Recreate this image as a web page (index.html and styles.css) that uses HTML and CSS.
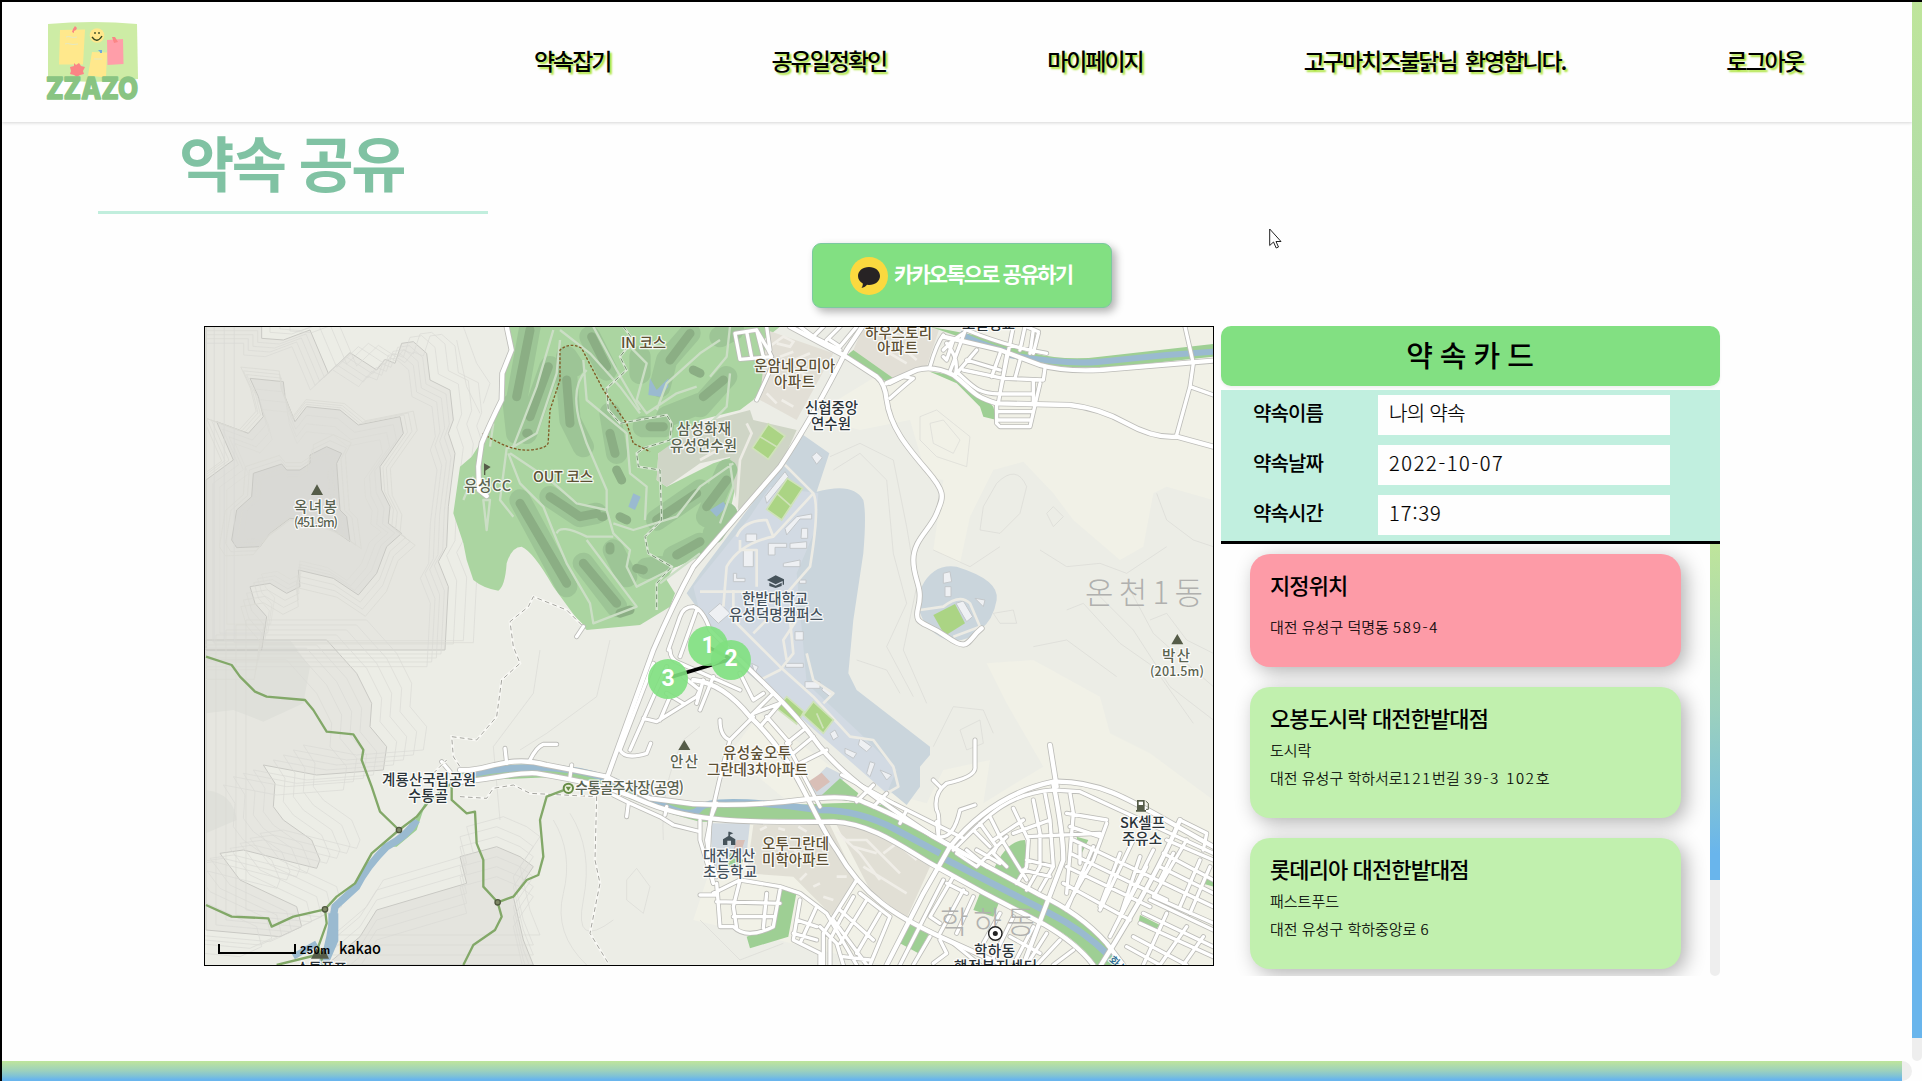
FILE: index.html
```html
<!DOCTYPE html>
<html lang="ko">
<head>
<meta charset="utf-8">
<title>ZZAZO - 약속 공유</title>
<link rel="stylesheet" href="styles.css">
</head>
<body>
<div class="window">
  <div class="page">
    <header class="header">
      <svg class="logo" viewBox="0 0 100 84" role="img" aria-label="ZZAZO">
        <path d="M5 5Q50 1 94 5L95 60Q50 66 5 60Z" fill="#cdeca5"/>
        <path d="M17 11l25-.5-2 35-24 0z" fill="#ffe88c"/>
        <path d="M49 33l15 .5-1 25-18-2z" fill="#ffe88c"/>
        <path d="M64 21l16-1 .5 25-16 1z" fill="#ff9ea9"/>
        <path d="M23 18q3-1 5 0t6 0M22 25q3-1 5 0t8 0M51 40h8" stroke="#e4e8c4" fill="none"/>
        <circle cx="54" cy="16.500" r="7.300" fill="#ffe88c"/>
        <path d="M49 18q5 7 10-1M52 13v2M56 13v2" stroke="#33451f" stroke-width="1.300" fill="none"/>
        <path d="M32 7l2 2-1 2-2 1 0 2-2-1 1-3zM69 18l3 0 3 5-4 1z" fill="#fb8585"/>
        <path d="M55 31h4v3h-2v-1z" fill="#71a9db"/>
        <path d="M31 44l2 2 3-2 2 3 4 1-2 4 1 3-4 1-3 2-3-2-4-1 1-3-1-4 4-1z" fill="#fb8585"/>
        <text class="logo-text" x="3" y="79.500" textLength="92" lengthAdjust="spacingAndGlyphs">ZZAZO</text>
      </svg>
      <nav class="nav">
        <a>약속잡기</a><a>공유일정확인</a><a>마이페이지</a><a>고구마치즈불닭님 환영합니다.</a><a>로그아웃</a>
      </nav>
    </header>

    <main class="main">
      <h1 class="title">약속 공유</h1>
      <button class="share">
        <svg class="talk" viewBox="0 0 38 38"><circle cx="19" cy="19" r="19" fill="#fbd93f"/><path d="M19 10c6.300 0 11 3.900 11 9s-4.700 9-11 9l-2-.2c-1.500 1.700-3.500 2.900-5.500 3.200.9-1.200 1.400-2.800 1.300-4.500C9.800 24.800 8 22.200 8 19c0-5.100 4.700-9 11-9z" fill="#272324"/></svg>
        <span>카카오톡으로 공유하기</span>
      </button>

      <div class="content">
        <div class="map">
          <svg viewBox="205 327 1008 638" width="1008" height="638">
            <defs>
              <path id="hillA" d="M18 20H185L185 55 250 60 330 30 385 160 450 98 530 150 555 118 585 130 605 70 640 65 680 100 690 180 750 210 760 300 745 340 765 400 745 560 740 680 715 725 745 800 735 990H18Z"/>
              <path id="hillB" d="M150 175L250 185 255 230 285 305 320 260 420 270 475 315 600 290 610 340 540 440 545 510 570 560 565 610 605 640 560 680 530 760 475 825 400 775 295 750 300 800 260 820 210 790 150 800 165 850 200 890 185 990H18V480L100 420 50 305 145 340 190 290 175 230Z"/>
              <path id="hillC" d="M330 405L380 380 425 400 410 430 420 570 440 590 450 665 400 630 320 600 270 595 210 640 180 680 110 683 95 660 110 570 155 530 160 460 245 432 260 450 300 450 330 430Z"/>
              <path id="hillD" d="M18 960H380L470 1060 515 1150 510 1220 560 1280 550 1350 350 1365 190 1335 225 1390 220 1460 250 1500 335 1560 360 1620 350 1645 130 1590 60 1600 120 1680 290 1760 305 1820 240 1850 18 1830Z"/>
              <path id="hillE" d="M890 1580L960 1610 1000 1640 940 1730 970 1860 1000 1935H380L480 1850 530 1770 800 1690 780 1610Z"/>
              <g id="wide">
                <path d="M2000 0L1940 90Q1840 290 1740 440L1480 740Q1420 850 1360 990L1215 1390"/>
                <path d="M1770 20L1930 105 2030 170Q2055 190 2060 240C2070 320 2120 380 2180 450S2230 530 2210 580 2140 660 2140 720 2170 800 2155 860 2170 900 2240 950 2300 960 2345 925"/>
                <path d="M2060 190L2150 150Q2200 135 2260 165C2320 210 2310 225 2390 250L2610 255Q2700 265 2780 310T2930 350L3040 380"/>
                <path d="M2230 50L2400 90 2520 135Q2590 155 2700 150L3040 122"/>
                <path d="M1620 1020C1700 1100 1780 1170 1860 1280 1940 1380 2080 1470 2200 1550L2290 1600 2520 1725Q2640 1780 2720 1870L2770 1935"/>
                <path d="M1480 1080Q1570 1090 1650 1190C1800 1330 1830 1480 1910 1590 1990 1730 2090 1790 2220 1850L2420 1940"/>
                <path d="M780 1350C850 1360 920 1300 1040 1335L1220 1370 1350 1435 1480 1452Q1650 1460 1800 1440T2000 1450Q2120 1500 2290 1600"/>
                <path d="M760 1385C860 1385 930 1355 1010 1360 1130 1380 1230 1400 1320 1440 1450 1500 1600 1510 1900 1505 2020 1510 2120 1590 2200 1635L2350 1718 2530 1812Q2630 1870 2680 1935"/>
                <path d="M2060 1935L2170 1720 2250 1580C2340 1470 2440 1410 2560 1385 2720 1380 2820 1460 3040 1580"/>
                <path d="M2940 1500Q2870 1670 2700 1940M2560 1390Q2590 1540 2590 1620 2560 1700 2470 1935M2550 1275L2570 1400"/>
                <path d="M920 20L935 90 907 160 905 240Q870 310 845 370L835 440 837 510 860 528"/>
              </g>
              <g id="small">
                <path d="M1605 40L1670 30 1705 90 1715 110 1620 118ZM1640 35L1655 112M1670 30L1690 110M1720 130L1670 240M1700 20L1710 90M1800 20L1840 50 1920 90M1840 50L1870 20M1880 60L1920 20M1890 60L1920 80 1970 20"/>
                <path d="M2230 45Q2210 70 2190 140M2230 90L2260 60 2290 40M2230 110L2240 120 2260 60M2300 20L2250 155M2240 70Q2280 120 2265 165M2300 30Q2420 80 2540 100M2330 90L2270 160M2300 120L2400 150M2290 150L2410 175 2530 180 2535 145M2270 155C2320 200 2330 220 2400 222H2500M2390 250V310L2400 320H2490L2520 190M2390 275H2500M2392 300H2495M2440 20L2400 220M2400 100L2375 170M2420 105L2395 250M2460 120L2445 175M2475 20L2460 90M2500 30L2490 100M2515 40L2500 100M2480 20L2515 35M2500 180L2500 250M2110 170L2140 175Q2120 190 2070 235M2070 190L2130 160"/>
                <path d="M2955 20L2980 130 2970 200 2930 345M2970 200L3040 225"/>
                <path d="M1480 860Q1450 860 1440 890L1405 990M1480 860Q1510 870 1530 930L1620 1020M1490 870L1440 1010M1410 990Q1410 1020 1440 1030L1620 1110M1360 1030L1260 1290Q1275 1320 1340 1300L1352 1270M1400 1040L1290 1290M1450 1070L1500 1110 1490 1130 1370 1205 1330 1195M1400 1120L1450 1150M1510 1080L1490 1150M1410 1130L1380 1200M1540 1070L1500 1170M1620 1060L1660 1140 1690 1120M1660 1180L1740 1150M1650 1190L1720 1120M1680 1220L1740 1150M1700 1190L1770 1270M1760 1270L1810 1230M1780 1300L1840 1250M1800 1330L1880 1290M1590 1260Q1560 1250 1560 1200M1590 1260L1660 1190M1590 1260Q1550 1400 1520 1560L1540 1690M1760 1270L1860 1460"/>
                <path d="M915 1285L920 1330M990 1320Q1010 1280 1030 1273H1070M1115 1335L1110 1370M1240 1425L1290 1450 1380 1490 1420 1515 1500 1535M1280 1490L1285 1450M1395 1485L1400 1460M1500 1500V1560L1540 1690M1530 1500L1525 1600 1550 1670M1550 1450L1530 1500M725 1325L750 1355M1130 950L1150 920"/>
                <path d="M1925 1365L2080 1450 2290 1555M2020 1395L1970 1445M2060 1420L2020 1460M2120 1470L2100 1510M2210 1505L2215 1550Q2260 1560 2280 1470L2325 1455M2215 1550Q2220 1480 2210 1470 2200 1420 2240 1390 2330 1370 2325 1340V1260M2220 1400L2200 1380"/>
                <path d="M2260 1590C2360 1490 2420 1420 2560 1410L2640 1415 2780 1480 3040 1600M2320 1530L2370 1580M2340 1510L2390 1580 2380 1600 2420 1640M2370 1490L2400 1550 2480 1680M2440 1465L2485 1560 2480 1640 2450 1690M2500 1440L2520 1540 2520 1640 2480 1710M2535 1420L2550 1500 2560 1640 2520 1710M2610 1420L2620 1480 2600 1720M2380 1560L2470 1500M2300 1590L2360 1640M2330 1590L2400 1630M2480 1550L2700 1540M2600 1480L2720 1500M2610 1520L2700 1550M2270 1600L2330 1640 2420 1550M2440 1540L2550 1500M2480 1620L2560 1640M2470 1650L2550 1670M2720 1510L2680 1620 2600 1760M2620 1560L3040 1760M2610 1600L2900 1740M2600 1640L2850 1760M2640 1570L2640 1630M2590 1690L2790 1800M2760 1600L2700 1760M2820 1610L2760 1790M2800 1560L2700 1770M2860 1590L2740 1830M2680 1580L2600 1770M2840 1640L2730 1850"/>
                <path d="M2940 1500L3020 1540 3010 1590M2900 1560L3040 1620M2890 1600L3040 1680M2880 1640L3040 1720M2960 1560L2860 1730 3040 1810M3000 1620L2940 1760M3030 1640L2970 1780M2920 1600L2880 1680M2850 1740L3040 1830M2830 1780L3040 1880M2820 1810L3040 1910M2800 1850L2960 1935M2780 1880L2880 1935M2900 1780L2830 1935M2960 1820L2880 1935M3010 1850L2950 1935"/>
                <path d="M2260 1670L2190 1790 2220 1810M2240 1690L2300 1720M2290 1710L2220 1840M2320 1730L2270 1840M2400 1780L2350 1870M2440 1790L2370 1935M2500 1820L2440 1935M2540 1840L2480 1935M2580 1860L2510 1935M2620 1890L2560 1935M2230 1680L2100 1935M2190 1850L2140 1935M2220 1860L2240 1900 2200 1930M2260 1870L2340 1935M2430 1850L2520 1900"/>
                <path d="M1550 1690L1560 1820 1600 1820Q1640 1860 1720 1820L1740 1710M1620 1680L1600 1760 1610 1825M1550 1745L1740 1750M1600 1790H1720M1540 1720L1620 1680 1740 1700 1800 1720 1880 1780 1970 1935M1700 1720L1690 1825M1800 1740L1780 1860 1860 1900 1860 1935M1850 1760L1800 1870M1970 1680L1870 1840 1870 1935M1960 1730L1920 1800 1890 1860 1890 1935M1980 1720L2070 1790 2010 1935M2000 1740L1920 1870M2040 1780L1970 1900M1900 1800L2000 1935M1920 1770L2020 1860M1860 1820L1910 1870 1930 1935M1790 1800L1850 1820M1780 1840L1850 1860M1500 1725H1545M1930 1910L2010 1920"/>
              </g>
              <g id="trees">
                <path d="M1060 30L1010 200 940 380M1080 60L1070 160 1010 340 940 380 920 385 900 540 940 590M1080 30L1170 100 1260 200 1320 280M1180 20L1250 150 1320 270M1290 80L1340 130 1310 240 1340 280 1430 220 1490 200M1370 270L1400 190 1500 100 1560 60M1160 150Q1110 200 1140 310L1160 370 1220 510 1220 570 1240 640 1290 690 1280 740 1310 800 1420 745M1150 120L1160 240 1280 340 1290 460 1340 500 1335 600M930 400L1050 480 1130 550 1220 570M925 400L960 490 1030 560 1070 660 1100 730 1170 850 1180 910 1310 860 1280 820 1160 660M1070 640Q1080 610 1160 650L1240 650M1240 610L1300 630 1430 590 1500 500 1600 430M860 630L850 540 870 540ZM790 540L820 470M1590 20L1580 110 1530 170M1590 160L1580 260 1530 310M1590 430L1600 500 1560 610M870 380L880 310M1380 790L1500 700"/>
              </g>
            </defs>
            <rect x="200" y="320" width="1020" height="650" fill="#ecede6"/>
            <g transform="translate(200 320) scale(.33333)">
              <use href="#hillA" fill="#e6e6e0"/><use href="#hillB" fill="#e0e0db"/><use href="#hillC" fill="#d9d9d5"/><use href="#hillD" fill="#e6e6e0"/><use href="#hillE" fill="#e4e4de"/>
              <path d="M18 960H270L330 1040 310 1150 190 1205 100 1170 18 1180Z" fill="#dfe0da"/>
              <path d="M18 1410Q100 1420 110 1500L18 1540Z" fill="#dfe0da"/>
              <g class="contour">
                <use href="#hillA"/><use href="#hillB"/><use href="#hillC"/><use href="#hillD"/><use href="#hillE"/>
                <g class="faint">
                  <use href="#hillA" transform="translate(-12 12)"/><use href="#hillA" transform="translate(-26 24)"/><use href="#hillA" transform="translate(-40 36)"/><use href="#hillA" transform="translate(-54 50)"/><use href="#hillA" transform="translate(25 -18)"/><use href="#hillA" transform="translate(55 -28)"/><use href="#hillA" transform="translate(85 -22)"/>
                  <use href="#hillB" transform="translate(22 44) scale(.93)"/><use href="#hillB" transform="translate(44 88) scale(.86)"/><use href="#hillB" transform="translate(66 130) scale(.79)"/><use href="#hillB" transform="translate(-18 -20) scale(1.050)"/><use href="#hillB" transform="translate(-35 -40) scale(1.100)"/><use href="#hillB" transform="translate(-50 -60) scale(1.150)"/>
                  <use href="#hillC" transform="translate(28 56) scale(.9)"/><use href="#hillC" transform="translate(56 112) scale(.8)"/><use href="#hillC" transform="translate(-28 -56) scale(1.100)"/><use href="#hillC" transform="translate(-56 -112) scale(1.200)"/>
                  <use href="#hillD" transform="translate(-30 15)"/><use href="#hillD" transform="translate(-60 25)"/><use href="#hillD" transform="translate(-90 35)"/><use href="#hillD" transform="translate(30 -15)"/><use href="#hillD" transform="translate(60 -30)"/><use href="#hillD" transform="translate(90 -45)"/><use href="#hillD" transform="translate(120 -60)"/><use href="#hillD" transform="translate(-120 60)"/>
                  <use href="#hillE" transform="translate(0 30)"/><use href="#hillE" transform="translate(0 60)"/><use href="#hillE" transform="translate(0 90)"/><use href="#hillE" transform="translate(0 -30)"/><use href="#hillE" transform="translate(0 -60)"/><use href="#hillE" transform="translate(20 -90)"/>
                  <path d="M790 20L830 130 870 190 850 250M770 60L800 200 840 280M1020 990L1000 1120 880 1280 900 1500M1230 960L1190 1130 1040 1240 960 1290M1060 1500Q1120 1600 1090 1720T1160 1935M1110 1480Q1180 1590 1150 1740T1240 1800M1280 1680L1310 1645 1350 1700 1330 1780 1280 1740ZM1390 1560Q1380 1400 1450 1260L1500 1220"/>
                </g>
              </g>
              <!-- open land on the east side -->
              <path d="M1830 290L2010 180 2350 20H3040V540L2900 500 2860 520 2830 680 2760 720 2620 600 2560 520 2470 425 2380 450 2310 590 2280 730 2200 690 2230 480 2180 470 2130 300 1980 330Z" fill="#f1f1e7"/>
              <path d="M2360 1030L2500 1020 2700 1130 2730 1240 2850 1300 3040 1440V1935H2400L2050 1935 1480 1800 1530 1650 1560 1500 1830 1500 1590 1300 1680 1180 1960 1390 2180 1450 2230 1350 2370 1320 2350 1450 2430 1400 2530 1340 2420 1150Z" fill="#f1f1e7"/>
              <g class="contour faint">
                <path d="M2160 290L2210 270 2260 310 2310 350 2300 440 2210 410 2160 360ZM2190 310L2230 300 2280 360 2260 400 2200 370ZM2390 490Q2450 430 2480 500L2460 580 2400 640 2340 630 2350 560ZM2540 580L2560 560 2590 590 2560 620Z"/>
                <path d="M1890 410L1980 370 2080 420 2120 620 2150 800 2110 990 2180 1150M1900 450L1980 400 2060 480 2080 700 2120 850 2060 980 2140 1130M2200 690L2310 740 2400 680M2520 690L2600 740 2700 730 2780 760 2900 680M2600 870L2650 850 2760 970 2860 1040 2980 1210M2700 830L2800 930 2910 1100 3040 1200M2780 790L2860 940 2960 1030 3040 1100M2850 900L2900 880 2960 960 3040 1000M2870 520L2900 600 2980 660 3040 680M2380 880L2440 870 2450 910 2400 910ZM2280 1230L2340 1200 2350 1270 2300 1290ZM2200 1280L2260 1160 2350 1170 2380 1240M1970 1020L2060 1050 2100 1120M1500 1800L1620 1920 1750 1870M2500 980L2600 960 2750 1070"/>
              </g>
              <!-- golf course -->
              <path d="M925 20L935 80 905 160 905 240 860 340 815 410 780 440 760 580 790 670 800 720 820 780Q850 805 895 812 915 800 920 730 935 680 965 680 1000 695 1060 800L1140 910 1160 930 1320 915 1410 860 1425 820 1400 780 1420 745 1500 710 1580 620 1620 440 1600 410 1540 430 1400 500 1370 480 1375 400 1500 350 1500 300 1620 270 1660 240 1720 160 1690 60 1740 20Z" fill="#abd5a1"/>
              <path d="M1500 310L1650 270 1660 300 1790 330 1740 440 1620 590 1600 500 1590 410 1500 430 1400 500 1370 480 1375 400Z" fill="#cfd5c6"/>
              <g class="rough"><path d="M990 20L950 240M940 250L950 340M1050 140L980 340M1100 170L1110 300 1150 380M1170 50L1220 150M1470 40L1400 120 1380 200M1320 110V160M1230 280L1250 400M1330 320H1390M960 540L1100 800M1050 530L1140 590 1190 580M1150 730L1250 860M1370 600L1500 510M1420 710L1500 670M1340 745L1380 740M1500 250L1400 290M1560 50L1600 30M1500 260L1580 170M1520 590L1580 450M1540 640L1580 580M1240 690L1280 770M1100 110L1120 140"/></g>
              <g class="fairway"><path d="M990 30L950 230M1045 140L990 290M1100 180L1110 310M1175 50L1220 140M1470 40L1410 120M1230 340L1245 400M1350 320H1390M960 550L1100 790M1050 530L1140 590 1190 580M1150 730L1250 850M1370 600L1490 520M1430 705L1500 665M1520 560L1580 480M1510 230L1570 180M1250 450L1265 480M1310 745L1330 750M1480 150L1500 160M1205 590H1210M1230 680V690M1260 880L1290 870M980 340H985M1260 590L1280 600"/></g>
              <g fill="#9abad0"><path d="M1350 175L1370 210 1405 175 1405 200 1380 230 1345 225ZM1300 520L1322 530 1305 570 1285 560ZM1530 570L1570 545 1580 560 1550 590Z"/></g>
              <use href="#trees" fill="none" stroke="#cbdec5" stroke-width="7" stroke-linejoin="round"/>
              <path d="M1270 20L1300 60 1260 110 1280 150 1220 205 1225 270 1260 310 1400 285 1415 310 1410 360 1330 385 1310 400 1315 440 1380 450 1385 600 1335 650 1345 700 1415 740 1370 790 1370 870" fill="none" stroke="#dbe7d6" stroke-width="7"/>
              <path d="M1270 20L1300 60 1260 110 1280 150 1220 205 1225 270 1260 310 1400 285 1415 310 1410 360 1330 385 1310 400 1315 440 1380 450 1385 600 1335 650 1345 700 1415 740 1370 790 1370 870" fill="none" stroke="#74946f" stroke-width="3" stroke-dasharray="14 10"/>
              <path d="M848 340Q930 395 990 390T1045 360L1050 270 1080 180V90Q1110 65 1145 85L1210 210 1280 310 1300 370 1350 395" fill="none" stroke="#805a25" stroke-width="4" stroke-dasharray="8 5"/>
              <!-- apartments and campus -->
              <path d="M1700 30L1900 100 1790 300 1680 240ZM1990 20H2220L2180 140 2060 180 1960 90Z" fill="#e2dfd6"/>
              <path d="M1810 345L1888 400 1850 515Q1960 485 1990 540 2000 580 1990 700L1960 900 1945 1060 1970 1110 2190 1280 2190 1305 2160 1340 2160 1400 2120 1455 1620 1040 1460 820 1500 760Z" fill="#cad5dc"/>
              <path d="M1650 590L1710 500 1855 520 1850 620 1790 760 1820 1090 1980 1240 2090 1350 2060 1420 1730 1130 1640 1020 1500 880 1480 800Z" fill="#d2dae3"/>
              <path d="M2165 800Q2200 730 2270 740 2400 780 2390 840 2380 900 2340 930 2300 970 2240 960 2170 930 2155 860Z" fill="#cad5dc"/>
              <path d="M1880 1340L1940 1370 1860 1430 1820 1400ZM1530 1510H1650L1640 1600 1540 1650Z" fill="#d2dae1"/>
              <path d="M1660 1515H1890L1950 1640 2020 1730 1970 1690 1900 1790 1780 1670 1640 1660ZM1910 1515L2010 1530 2190 1640 2120 1795 2010 1710Z" fill="#e1dfd5"/>
              <g fill="#9ecf94">
                <path d="M1960 90L2080 175 2060 185 1930 115ZM2190 155Q2290 160 2380 260L2390 300 2350 290 2340 260 2270 190Z"/>
                <path d="M2190 20L2350 50 2480 95Q2600 125 2700 110L3040 72V110L2750 140Q2550 150 2440 115L2290 55Z"/>
                <path d="M780 1360Q930 1320 1060 1340L1220 1370 1350 1430 1500 1455Q1700 1460 1900 1450T2080 1490L2300 1600 2570 1745Q2680 1800 2740 1900L2770 1935H2690Q2630 1850 2500 1790L2200 1635Q2030 1520 1900 1505H1500Q1390 1480 1250 1420L1080 1370 850 1380Z"/>
                <path d="M1860 1430L1920 1375 1975 1420 1960 1445ZM2380 1650Q2420 1560 2475 1560 2490 1620 2450 1690ZM1740 1700L1790 1715 1765 1850 1650 1885 1640 1850 1720 1820ZM2130 1810L2190 1835 2155 1900 2100 1870ZM2340 1720L2400 1740 2380 1790 2320 1770ZM2630 1550L2665 1560 2640 1610ZM2820 1785L2880 1815 2860 1835 2815 1810ZM3015 1670L3040 1680V1700L3005 1690Z"/>
                <path d="M560 1580L640 1510 680 1440 650 1530 590 1580Z"/>
              </g>
              <g fill="none" stroke="#9abad0">
                <path d="M800 1365Q930 1335 1070 1345T1340 1430 1500 1465 1860 1470Q1980 1470 2090 1530L2220 1600M2235 1617L2540 1775Q2650 1830 2730 1910" stroke-width="20"/>
                <path d="M2280 40Q2330 70 2420 95M2430 105Q2600 135 2700 125L2900 105 3040 95" stroke-width="18"/>
                <path d="M650 1500Q620 1550 560 1580 500 1640 470 1700L405 1760 390 1850 370 1935" stroke-width="22"/>
                <path d="M400 1780V1860L370 1930" stroke-width="30"/><path d="M280 1910L350 1870" stroke-width="18"/>
              </g>
              <g class="building">
                <path d="M1835 410L1850 397 1867 413 1850 433ZM1695 530L1755 455 1765 470 1700 550ZM1638 642H1670V665H1638ZM1630 690H1660V740H1630ZM1705 670H1760V682H1725V705H1705ZM1770 670L1820 665V685H1770ZM1750 730L1800 720V740H1750ZM1600 760H1610V775H1635V785H1600ZM1525 880L1560 850 1590 880 1555 910ZM1755 625L1790 590 1835 582V597H1800L1760 645ZM1805 625H1823V655H1803ZM1798 780H1818V790H1798ZM1785 935H1810V960H1785ZM1757 1030H1810V1042H1757ZM1815 1085H1860V1105H1815ZM1870 1100L1900 1120 1890 1130 1865 1110ZM1890 1240L1905 1230 1915 1250 1900 1260ZM1980 1255L2015 1280 2000 1295 1975 1275ZM1935 1285L1970 1300 1960 1315 1935 1300ZM2010 1325L2025 1330 2010 1370 2000 1360ZM2040 1350L2075 1365 2060 1380ZM1655 1030L1675 1040 1665 1060ZM2230 760L2250 755 2255 785 2230 790ZM2235 800H2253V830H2235ZM2268 850L2290 843 2318 890 2300 905ZM2325 835L2355 840 2350 860Z"/>
                <g class="block">
                  <path d="M1715 75L1750 50 1780 65 1770 80 1730 70M1740 110L1780 95M1760 130L1830 100M1700 220L1730 250M1745 240L1780 260M1790 150L1840 180M2035 80L2120 130M2080 60L2150 120M2060 30L2110 60M1910 1535L1980 1600 2040 1680M1930 1560L2000 1560 2100 1660M1960 1580L2030 1600M1990 1640L2120 1720M2050 1600L2090 1570 2150 1620M1680 1530L1700 1520M1735 1525L1755 1530M1795 1520L1820 1535M1710 1570L1740 1590M1780 1580L1790 1600M1800 1680L1820 1660M1840 1700L1860 1690M1870 1730L1900 1740M1910 1670L1940 1670"/>
                </g>
              </g>
              <g class="campusroad"><path d="M1755 435L1840 520 1720 650Q1620 670 1580 740L1570 860M1840 520Q1860 560 1830 740L1760 820M1610 650Q1630 600 1700 600L1720 650M1620 660V690H1670V800M1500 815H1660L1760 840M1600 810V900L1660 960 1740 1040 1840 1130 1950 1250 2020 1260 2080 1340 2095 1400 2060 1420M1770 900L1780 1000 1740 1050 1680 1080M1660 940L1720 880M2160 870L2230 860Q2280 820 2310 850L2340 920 2260 950M1760 1020L1750 960 1790 900M1820 1000L1840 1080 1900 1120 1870 1150M1640 310L1655 340 1620 420 1610 560M1590 370L1500 420"/></g>
              <g fill="#abd484" stroke="#cfe2b9" stroke-width="5"><path d="M1705 312L1755 348 1705 418 1657 384ZM1762 475L1808 505 1745 600 1700 568ZM1760 1130L1812 1175 1790 1212 1730 1165ZM1840 1145L1900 1200 1870 1240 1810 1185Z"/><path d="M1680 350L1730 380M1730 520L1775 560M1850 1180L1870 1225" fill="none"/></g>
              <path d="M2200 885L2265 852 2295 910 2235 947Z" fill="#abd484"/>
              <path d="M1825 1385L1865 1358 1890 1385 1850 1415ZM1610 1560H1635L1625 1590H1600Z" fill="#d9bfb7"/>
              <path d="M1590 1600L1630 1620 1620 1645 1580 1640Z" fill="#9ecf94"/>
              <use href="#small" class="case-small"/><use href="#wide" class="case-wide"/>
              <use href="#small" class="road-small"/><use href="#wide" class="road-wide"/>
              <!-- footpaths and hiking trails -->
              <path class="footcase" d="M1145 915L1100 870 1000 830 985 860 930 905 940 980 960 1030 905 1080 890 1190 830 1260 755 1250 760 1310 780 1340M700 1360L740 1320M780 1430L860 1435 880 1405 940 1395 990 1420 1190 1430 1185 1620 1200 1690 1170 1840 1225 1930"/>
              <path class="foot" d="M1145 915L1100 870 1000 830 985 860 930 905 940 980 960 1030 905 1080 890 1190 830 1260 755 1250 760 1310 780 1340M700 1360L740 1320M780 1430L860 1435 880 1405 940 1395 990 1420 1190 1430 1185 1620 1200 1690 1170 1840 1225 1930"/>
              <g class="trail"><path d="M18 1010L95 1035 120 1070 165 1115 200 1130 315 1140 340 1170 380 1235 460 1243 490 1290 485 1320 515 1400 540 1475 597 1530 650 1490 690 1440 755 1390M597 1530L515 1600 465 1690 410 1730 375 1768 380 1810 355 1880 370 1935M375 1768L280 1790 215 1820 205 1795 95 1790 18 1755M755 1400L755 1440 800 1480 825 1475 830 1570 850 1620 850 1700 893 1747 905 1790 885 1830 820 1875 790 1935M893 1747L940 1730 980 1680 1015 1665 1030 1610 1020 1500 1040 1430 1105 1405M350 1905L230 1935"/></g>
              <g fill="#7d8865" stroke="#50583f" stroke-width="4"><circle cx="597" cy="1530" r="8"/><circle cx="375" cy="1768" r="8"/><circle cx="893" cy="1747" r="8"/></g>
              <circle cx="1105" cy="1405" r="14" fill="#eef2df" stroke="#668c45" stroke-width="6"/><path d="M1097 1400h16l-8 13z" fill="#668c45"/>
              <g fill="#555c48"><path d="M333 525L351 493 369 525ZM1435 1290L1453 1260 1471 1290ZM2914 973L2932 942 2950 973ZM333 1916L350 1885 362 1905 372 1885 387 1916ZM852 430L872 441 856 452V465H852Z"/></g>
              <path d="M1701 780L1727 766 1752 778 1752 794 1748 794 1748 783 1727 793ZM1708 788L1727 797 1745 788V798L1727 804 1708 798Z" fill="#46535b"/>
              <path d="M1569 1575V1558L1585 1548V1535H1589L1600 1540 1590 1544V1548L1606 1558V1575H1593V1562H1582V1575Z" fill="#46535b"/>
              <path d="M2811 1440H2834V1470H2838V1475H2808V1470H2811Z" fill="#555c48"/><path d="M2837 1443L2845 1450V1468H2838" fill="none" stroke="#555c48" stroke-width="3"/><path d="M2816 1445H2829V1455H2816Z" fill="#fff"/>
            </g>

            <g class="area-label"><text x="1085" y="604" textLength="118">온천1동</text><text x="940" y="933" textLength="95">학하동</text></g>
            <g class="label">
              <g class="brown"><text x="621" y="348" textLength="45">IN 코스</text><text x="533" y="482" textLength="60">OUT 코스</text><text x="754" y="371" textLength="81">운암네오미아</text><text x="774" y="387" textLength="41">아파트</text><text x="865" y="338" textLength="67">하우스토리</text><text x="877" y="353" textLength="41">아파트</text><text x="723" y="758" textLength="68">유성숲오투</text><text x="707" y="775" textLength="101">그란데3차아파트</text><text x="762" y="849" textLength="67">오투그란데</text><text x="762" y="865" textLength="67">미학아파트</text></g>
              <g class="olive"><text x="464" y="491" textLength="47">유성CC</text><text x="677" y="434" textLength="54">삼성화재</text><text x="670" y="451" textLength="67">유성연수원</text><text x="294" y="512" textLength="43">옥녀봉</text><text class="height" x="294" y="527" textLength="44">(451.9m)</text><text x="670" y="767" textLength="28">안산</text><text x="575" y="793" textLength="109">수통골주차장(공영)</text><text x="1162" y="661" textLength="28">박산</text><text class="height" x="1150" y="676" textLength="54">(201.5m)</text></g>
              <g class="navy"><text x="805" y="413" textLength="53">신협중앙</text><text x="811" y="429" textLength="40">연수원</text><text x="382" y="785" textLength="94">계룡산국립공원</text><text x="408" y="801" textLength="40">수통골</text><text x="1120" y="828" textLength="45">SK셀프</text><text x="1122" y="844" textLength="40">주유소</text><text x="974" y="956" textLength="41">학하동</text><text x="954" y="972" textLength="83">행정복지센터</text><text x="962" y="329" textLength="53">오월정교</text><text x="296" y="974" textLength="51">수통폭포</text></g>
              <g class="slate"><text x="742" y="604" textLength="66">한밭대학교</text><text x="729" y="620" textLength="94">유성덕명캠퍼스</text><text x="703" y="861" textLength="52">대전계산</text><text x="703" y="877" textLength="54">초등학교</text></g>
              <text class="river" x="1108" y="961" transform="rotate(42 1108 961)">화산천</text>
            </g>
            <circle cx="995.300" cy="933.500" r="6.700" fill="#fff" stroke="#222" stroke-width="1.400"/><circle cx="995.300" cy="933.500" r="2.500" fill="#222"/>
            <path d="M668 678L731 659 708 647" fill="none" stroke="#000" stroke-width="3.500"/>
            <g fill="#7fe07f" fill-opacity=".9"><circle cx="708" cy="646" r="20"/><circle cx="731" cy="660" r="20"/><circle cx="668" cy="679" r="20"/></g>
            <g class="pin"><text x="708" y="653">1</text><text x="731" y="666">2</text><text x="668" y="686">3</text></g>
            <path d="M219 944V953H295V944" fill="none" stroke="#000" stroke-width="2"/>
            <text class="scale" x="300" y="954" textLength="30">250m</text><text class="kakao" x="339" y="954" textLength="42" lengthAdjust="spacingAndGlyphs">kakao</text>
          </svg>
        </div>

        <section class="panel">
          <h2 class="panel-title">약속카드</h2>
          <div class="form">
            <label>약속이름</label><div class="field">나의 약속</div>
            <label>약속날짜</label><div class="field"><span class="date">2022-10-07</span></div>
            <label>약속시간</label><div class="field"><span class="time">17:39</span></div>
          </div>
          <div class="list">
            <div class="cards">
              <article class="card place"><h3>지정위치</h3><p>대전 유성구 덕명동 <span class="num">589-4</span></p></article>
              <article class="card"><h3>오봉도시락 대전한밭대점</h3><p>도시락</p><p>대전 유성구 학하서로<span class="num">121</span>번길 <span class="num">39-3 102</span>호</p></article>
              <article class="card"><h3>롯데리아 대전한밭대점</h3><p>패스트푸드</p><p>대전 유성구 학하중앙로 <span class="num">6</span></p></article>
            </div>
            <div class="track"><div class="thumb list-thumb"></div></div>
          </div>
        </section>
      </div>
    </main>
  </div>
  <div class="track"><div class="thumb page-thumb"></div></div>
  <div class="track track-x"><div class="thumb x-thumb"></div></div>
</div>
<svg class="cursor" viewBox="0 0 13 21"><path d="M.7 1v16.500l3.800-3.500 2.700 6 2.300-1-2.500-5.500h5z" fill="#fff" stroke="#222" stroke-width="1"/></svg>
</body>
</html>
```

FILE: styles.css
```css
* { box-sizing: border-box; }
body {
  margin: 0;
  width: 1922px;
  height: 1081px;
  overflow: hidden;
  font-family: "Noto Sans CJK KR", "Noto Sans", sans-serif;
  color: #000;
}
h1, h2, h3, p { margin: 0; }

.window {
  display: grid;
  grid-template-columns: 1fr 10px;
  grid-template-rows: 1059px 20px;
  height: 1081px;
  border-top: 2px solid #000;
  border-left: 2px solid #000;
  background: #fefefe;
}
.page { overflow: hidden; }

.header {
  display: flex;
  align-items: center;
  height: 120px;
  padding-left: 41px;
  background: #fefefe;
  box-shadow: 0 1px 3px rgba(0, 0, 0, .16);
}
.logo { width: 100px; height: 84px; margin-top: -3px; overflow: visible; }
.logo-text { font: 800 30px "Inter", sans-serif; fill: #89c482; stroke: #89c482; stroke-width: 1.500; stroke-linejoin: round; }
.nav { display: flex; gap: 161px; margin: -4px 0 0 391px; }
.nav a {
  font-size: 23px;
  font-weight: 500;
  line-height: 34px;
  letter-spacing: -2.050px;
  word-spacing: 4px;
  white-space: nowrap;
  text-shadow: 2px 2px 2px #a6e22e;
}

.title {
  width: 390px;
  height: 92px;
  margin-left: 96px;
  border-bottom: 3px solid #c1eedd;
  text-align: center;
  text-indent: -3px;
  font-size: 60px;
  font-weight: 700;
  line-height: 77px;
  letter-spacing: -2.600px;
  color: #80c2a3;
}
.share {
  display: flex;
  align-items: center;
  gap: 6px;
  width: 300px;
  height: 65px;
  margin: 29px 0 0 810px;
  padding: 0 0 0 37px;
  border: 1px solid #7cc9a0;
  border-radius: 9px;
  background: #82e082;
  box-shadow: 4px 4px 9px rgba(0, 0, 0, .3);
  font: 700 21px "Noto Sans CJK KR", sans-serif;
  letter-spacing: -1.900px;
  white-space: nowrap;
  color: #fff;
}
.share span { padding-bottom: 5px; }
.talk { width: 38px; height: 38px; flex: none; }

.content { display: flex; gap: 7px; margin: 18px 0 0 202px; }
.map { width: 1010px; height: 640px; border: 1px solid #000; overflow: hidden; }
.map svg { display: block; }
.contour { fill: none; stroke: #c9c9c4; stroke-width: 3; stroke-linejoin: round; }
.faint { fill: none; stroke: #dadad4; stroke-width: 2; }
.rough { fill: none; stroke: #9dc596; stroke-width: 64; stroke-linecap: round; stroke-linejoin: round; }
.fairway { fill: none; stroke: #8bae84; stroke-width: 27; stroke-linecap: round; stroke-linejoin: round; }
.building { fill: #eef0f3; stroke: #c3c7ca; stroke-width: 3; }
.block { fill: none; stroke: #f0eee8; stroke-width: 8; }
.campusroad { fill: none; stroke: #ecebe4; stroke-width: 8; stroke-linejoin: round; }
.case-wide, .case-small, .road-wide, .road-small { fill: none; stroke-linejoin: round; stroke-linecap: round; }
.case-wide { stroke: #bdbdb9; stroke-width: 18; }
.case-small { stroke: #bdbdb9; stroke-width: 15; }
.road-wide { stroke: #fff; stroke-width: 13; }
.road-small { stroke: #fff; stroke-width: 10; }
.footcase { fill: none; stroke: #f8f8f4; stroke-width: 8; }
.foot { fill: none; stroke: #a5a59f; stroke-width: 3; stroke-dasharray: 14 10; }
.trail { fill: none; stroke: #82a868; stroke-width: 7; stroke-linejoin: round; }
.label { font-size: 14.500px; font-weight: 500; }
.label text { paint-order: stroke; stroke: rgba(255, 255, 255, .85); stroke-width: 2.500px; stroke-linejoin: round; }
.brown { fill: #5d5034; }
.olive { fill: #5a6350; }
.navy { fill: #2b3439; }
.slate { fill: #45525d; }
.label .height { font-size: 12.500px; }
.label .river { font-size: 11px; fill: #2c6d94; }
.area-label { font-size: 31px; font-weight: 300; fill: #b0b0ae; }
.pin { font: 700 23px Roboto, sans-serif; fill: #fff; text-anchor: middle; }
.scale { font: 700 11px "Liberation Sans", sans-serif; }
.kakao { font: 500 16px "Noto Sans CJK KR", sans-serif; }

.panel { width: 499px; }
.panel-title {
  height: 60px;
  padding-left: 6px;
  border-radius: 10px;
  background: #82e082;
  box-shadow: 0 2px 3px rgba(0, 0, 0, .06);
  text-align: center;
  font-size: 29px;
  font-weight: 500;
  line-height: 56px;
  letter-spacing: 7px;
}
.form {
  display: grid;
  grid-template-columns: 125px 292px;
  grid-auto-rows: 40px;
  row-gap: 10px;
  height: 154px;
  margin-top: 4px;
  padding: 5px 0 0 32px;
  border-bottom: 3px solid #000;
  background: #c1efdf;
}
.form label { font-size: 20px; font-weight: 500; line-height: 35px; letter-spacing: -.9px; }
.field {
  padding-left: 11px;
  background: #fefefe;
  font-size: 20px;
  font-weight: 300;
  line-height: 36px;
  letter-spacing: -.7px;
  -webkit-text-stroke: .2px #000;
}
.date { letter-spacing: 1.650px; }
.time { letter-spacing: 1px; }
.list { display: grid; grid-template-columns: 489px 10px; height: 432px; }
.cards { display: flex; flex-direction: column; gap: 20px; padding: 10px 29px; overflow: hidden; }
.card {
  flex: none;
  height: 131px;
  padding: 13px 20px;
  border-radius: 20px;
  background: #c1f0ae;
  box-shadow: 5px 5px 20px rgba(0, 0, 0, .3);
}
.card h3 { margin-bottom: 2px; font-size: 22px; font-weight: 500; line-height: 34px; letter-spacing: -.9px; white-space: nowrap; }
.card p { font-size: 15px; font-weight: 300; line-height: 28px; white-space: nowrap; -webkit-text-stroke: .2px #000; }
.num { letter-spacing: 1.800px; }
.place { height: 113px; background: #fd9ba7; }
.place p { margin-top: 12px; }

.track { border-radius: 0 0 8px 8px; background: #eee; }
.thumb { background: linear-gradient(#bfe59b, #9bd0be 50%, #7fc2d6 75%, #69b5ec 92%); }
.page-thumb { height: 1036px; }
.list-thumb { height: 336px; }
.track-x { width: 1910px; border-radius: 0 10px 10px 0; }
.x-thumb { width: 1900px; height: 20px; }
.cursor { position: absolute; left: 1269px; top: 228px; width: 13px; height: 21px; }
```
